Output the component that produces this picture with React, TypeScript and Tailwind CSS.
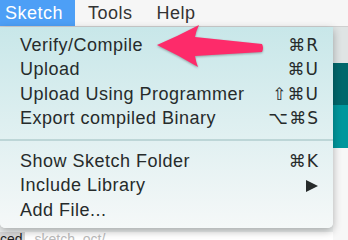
import React from "react";

const groupOne = [
  { label: "Verify/Compile", keys: "⌘R" },
  { label: "Upload", keys: "⌘U" },
  { label: "Upload Using Programmer", keys: "⇧⌘U" },
  { label: "Export compiled Binary", keys: "⌥⌘S" },
];

const groupTwo = [
  { label: "Show Sketch Folder", keys: "⌘K" },
  { label: "Include Library", keys: "", submenu: true },
  { label: "Add File...", keys: "" },
];

const MenuRow = ({ label = "", keys = "", submenu = false }) => {
  return <div className="flex h-[24.5px] items-center justify-between pl-[20px] pr-[14px]">
      <span>{label}</span>
      {submenu ? <svg width="12" height="12" viewBox="0 0 12 12" className="mr-[1px]">
          <polygon points="0,0 12,6 0,12" fill="#262b2b" />
        </svg> : <span className="font-['DejaVu_Sans'] text-[17px] tracking-[1px]">{keys}</span>}
    </div>;
};

export default function App() {
  return <div className="relative h-[240px] w-[348px] overflow-hidden bg-[#f2f2f2] font-['Liberation_Sans',sans-serif] text-[18px] tracking-[0.5px]">
      {/* menu bar */}
      <div className="flex h-[27px] border-b border-[#cfcfcf] bg-[#f6f6f6] text-[#333]">
        <div className="flex w-[75px] items-center bg-[#4d9ff6] pl-[5px] text-white">Sketch</div>
        <div className="flex items-center pl-[13px]">Tools</div>
        <div className="flex items-center pl-[24px]">Help</div>
      </div>

      {/* window behind the menu */}
      <div className="flex h-[213px]">
        <div className="flex flex-1 flex-col bg-[#eef1f1]">
          <div className="flex-1" />
          <div className="flex h-[8px] items-start overflow-hidden bg-white text-[14px] leading-[14px] tracking-normal">
            <span className="bg-[#d9d9d9] pr-[2px] text-[#222]">ced</span>
            <span className="pl-[10px] text-[#bbb]">sketch_oct/</span>
          </div>
        </div>
        <div className="flex w-[15px] flex-col">
          <div className="h-[36px] bg-[#dfe4e4]" />
          <div className="h-[42px] bg-[#00676b]" />
          <div className="h-[43px] bg-[#00979c]" />
          <div className="flex-1 bg-[#f7f7f7]" />
        </div>
      </div>

      {/* dropdown */}
      <div className="absolute left-0 top-[27px] h-[201px] w-[333px] rounded-b-[5px] bg-gradient-to-b from-[#c8e7e9] to-[#f5f8f8] pt-[6px] text-[#262b2b] shadow-[0_3px_8px_rgba(0,0,0,0.3)]">
        {groupOne.map(r => <MenuRow key={r.label} label={r.label} keys={r.keys} />)}
        <div className="mt-[8px] mb-[8px] h-[2px] bg-[#bdd6d7]" />
        {groupTwo.map(r => <MenuRow key={r.label} label={r.label} keys={r.keys} submenu={r.submenu} />)}
      </div>

      {/* pink pointer */}
      <svg className="absolute left-0 top-0 drop-shadow-[0_1px_1px_rgba(0,0,0,0.3)]" width="348" height="240">
        <path d="M157 45 Q178 36 199 25 Q196 31 195 37 L262 44 Q264 48 262 52 L195 56 Q196 62 198 67 Q178 55 157 45 Z" fill="#fd2b6a" />
      </svg>
    </div>;
}
